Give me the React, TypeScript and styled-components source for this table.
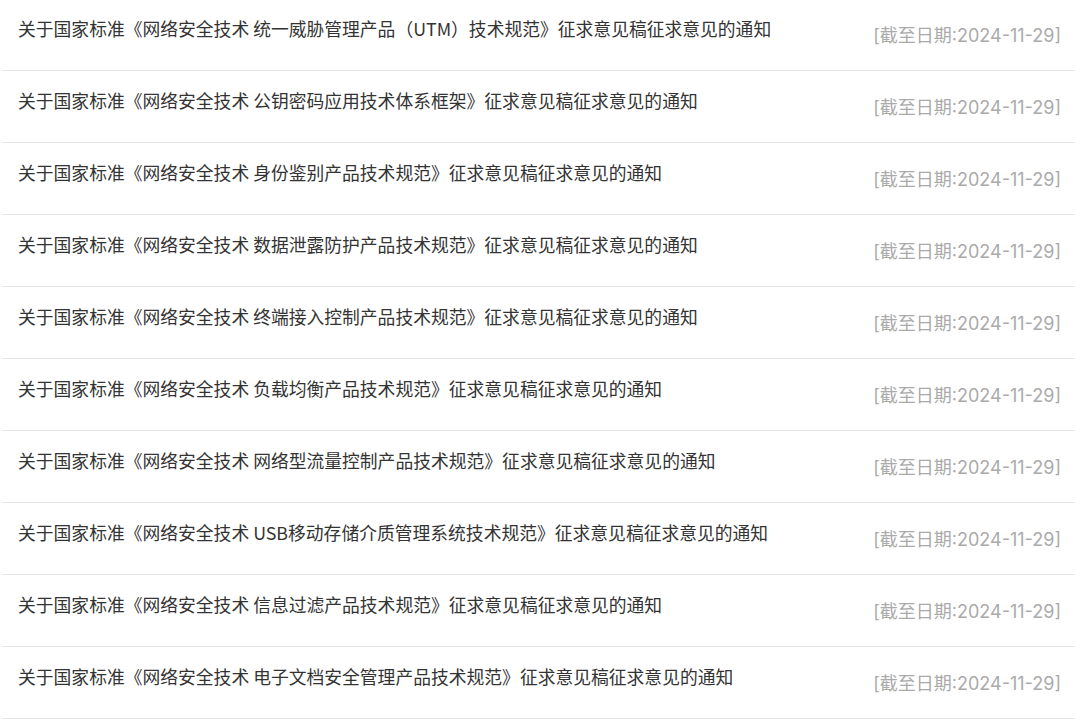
import React from 'react';
import styled, { createGlobalStyle } from 'styled-components';

const GlobalStyle = createGlobalStyle`
  html, body {
    margin: 0;
    padding: 0;
    background: #ffffff;
  }
  body {
    font-family: "PingFang SC", "Noto Sans CJK SC", "Noto Sans", sans-serif;
    overflow: hidden;
  }
`;

const notices = [
  '统一威胁管理产品（UTM）技术规范',
  '公钥密码应用技术体系框架',
  '身份鉴别产品技术规范',
  '数据泄露防护产品技术规范',
  '终端接入控制产品技术规范',
  '负载均衡产品技术规范',
  '网络型流量控制产品技术规范',
  'USB移动存储介质管理系统技术规范',
  '信息过滤产品技术规范',
  '电子文档安全管理产品技术规范'
];

const App: React.FC = () => {
  return (
    <>
      <GlobalStyle />
      <List>
        {notices.map((name) => (
          <Row key={name}>
            <Title>关于国家标准《网络安全技术 {name}》征求意见稿征求意见的通知</Title>
            <Deadline>[截至日期:2024-11-29]</Deadline>
          </Row>
        ))}
      </List>
    </>
  );
};

export default App;

const List = styled.ul`
  list-style: none;
  margin: -1px 0 0;
  padding: 0 5px 0 2px;
  width: 1073px;
`;

const Row = styled.li`
  display: flex;
  align-items: flex-start;
  justify-content: space-between;
  height: 71px;
  box-sizing: content-box;
  border-bottom: 1px solid #e6e6e6;
  padding: 0 14px 0 16px;
`;

const Title = styled.span`
  margin-top: 17px;
  font-size: 17.8px;
  line-height: 24px;
  color: #333333;
  white-space: nowrap;
`;

const Deadline = styled.span`
  margin-top: 25px;
  font-family: "Inter", "PingFang SC", "Noto Sans CJK SC", sans-serif;
  font-size: 18px;
  line-height: 24px;
  color: #aaaaaa;
  white-space: nowrap;
`;
